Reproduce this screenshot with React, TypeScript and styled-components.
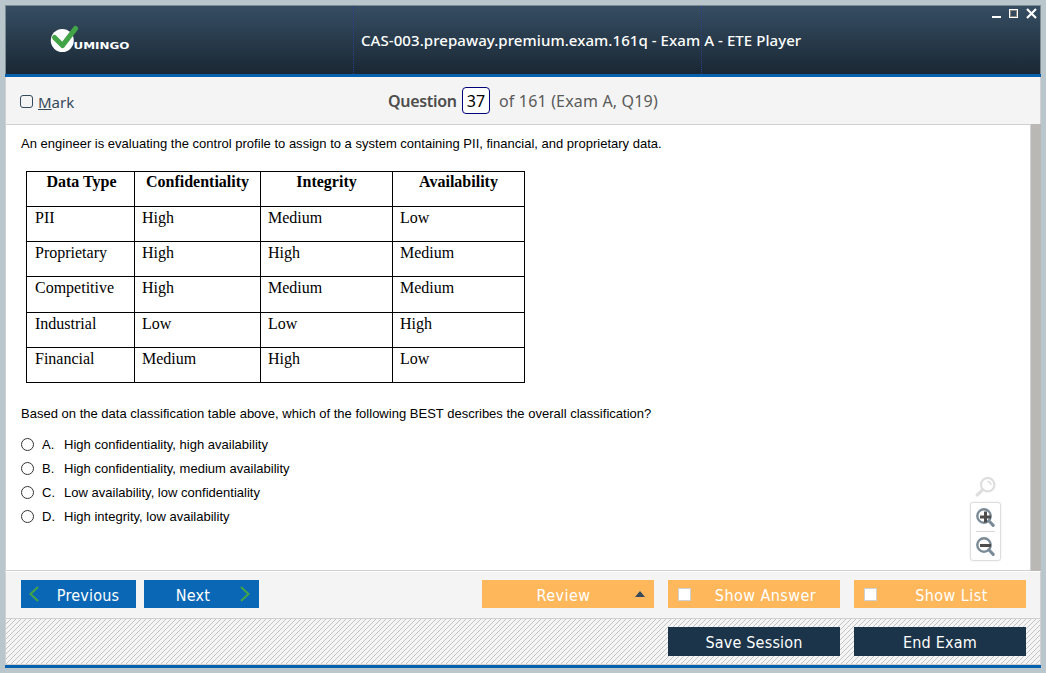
import React from "react";
import styled, { createGlobalStyle } from "styled-components";

const ui = `"Noto Sans", "Open Sans", sans-serif`;
const buttonFont = `"DejaVu Sans Condensed", "DejaVu Sans", sans-serif`;

const GlobalStyle = createGlobalStyle`
  * { box-sizing: border-box; }
  body { margin: 0; background: #b9c6cc; overflow: hidden; }
`;

const Desktop = styled.div`
  height: 673px;
  padding: 5px;
  background: #b9c6cc;
`;

const Window = styled.div`
  display: flex;
  flex-direction: column;
  width: 1036px;
  height: 663px;
`;

const Header = styled.header`
  display: grid;
  grid-template-columns: 348px 348px 1fr;
  height: 69px;
  border: 1px solid #7b8c92;
  border-bottom: 0;
  background: linear-gradient(#364e63, #1a2734);
`;

const HeaderCell = styled.div<{ $ruled?: boolean }>`
  height: 68px;
  border-right: ${(p) => (p.$ruled ? "1px dotted #2c3f8c" : "0")};
`;

const LogoCell = styled(HeaderCell)`
  padding: 18px 0 0 44px;
`;

const Title = styled.h1`
  margin: 0;
  padding: 23px 0 0 7px;
  font: 500 15px/22px ${ui};
  letter-spacing: 0.07px;
  color: #fff;
  white-space: nowrap;
`;

const WindowControls = styled.div`
  display: flex;
  justify-content: flex-end;
  padding: 2px 2px 0 0;
`;

const Accent = styled.div`
  height: 3px;
  background: #0560ae;
`;

const QuestionBar = styled.div`
  display: flex;
  align-items: flex-start;
  height: 48px;
  border: 1px solid #d0d0d0;
  border-top: 0;
  background: #f4f4f4;
`;

const MarkLabel = styled.label`
  display: flex;
  align-items: center;
  gap: 5px;
  width: 382px;
  padding: 14px 0 0 14px;
  font: 15px/22px ${ui};
  color: #34495c;
`;

const MarkBox = styled.span`
  width: 13px;
  height: 13px;
  margin-top: -2px;
  border: 1px solid #34495c;
  border-radius: 3px;
`;

const Counter = styled.div`
  display: flex;
  padding-top: 10px;
  font: 16px/28px ${ui};
  letter-spacing: 0.17px;
  color: #5a5a5a;
  white-space: nowrap;
`;

const CounterWord = styled.b`
  width: 74px;
  font-weight: 600;
  letter-spacing: -0.3px;
  color: #4d4d4d;
`;

const NumberBox = styled.span`
  width: 28px;
  height: 27px;
  margin-right: 9px;
  border: 1px solid #00007c;
  border-radius: 4px;
  background: #fff;
  color: #000;
  line-height: 27px;
  letter-spacing: 0;
  text-align: center;
`;

const Body = styled.main`
  display: flex;
  height: 447px;
  margin-top: -1px;
`;

const Page = styled.section`
  display: flex;
  justify-content: space-between;
  width: 1026px;
  height: 447px;
  border: 1px solid #d0d0d0;
  background: #fff;
`;

const Scrollbar = styled.div`
  width: 10px;
  background: #bab8b4;
`;

const Content = styled.div`
  padding: 10px 0 0 15px;
  font: 13px/18px "Liberation Sans", Arial, sans-serif;
  color: #000;
  white-space: nowrap;
`;

const Text = styled.p`
  margin: 0;
  letter-spacing: 0.01px;
`;

const DataTable = styled.table`
  table-layout: fixed;
  width: 499px;
  margin: 18px 0 22px 5px;
  border-collapse: collapse;
  font: 16px/18px "Liberation Serif", "Times New Roman", serif;
`;

const Column = styled.col<{ $w: number }>`
  width: ${(p) => p.$w}px;
`;

const Row = styled.tr<{ $h?: number }>`
  height: ${(p) => p.$h ?? 35}px;
`;

const Cell = styled.td`
  padding: 2px 0 0 7px;
  border: 1px solid #000;
  vertical-align: top;

  &:first-child {
    padding-left: 8px;
  }
`;

const HeadCell = styled.th`
  padding: 1px 0 0;
  border: 1px solid #000;
  vertical-align: top;
  text-align: center;

  &:first-child {
    padding-left: 2px;
  }
`;

const Options = styled.div`
  margin-top: 10px;
`;

const Option = styled.label`
  display: flex;
  align-items: center;
  height: 24px;
`;

const Radio = styled.span`
  width: 13px;
  height: 13px;
  margin: -1px 8px 0 0;
  border: 1px solid #333;
  border-radius: 50%;
`;

const Letter = styled.span`
  width: 22px;
`;

const ZoomTools = styled.div`
  display: flex;
  flex-direction: column;
  align-items: center;
  align-self: flex-end;
  width: 31px;
  margin: 0 29px 9px 0;
`;

const ZoomPanel = styled.div`
  display: flex;
  flex-direction: column;
  align-items: center;
  width: 31px;
  height: 59px;
  margin-top: 5px;
  border: 1px solid #dedede;
  border-radius: 3px;
  box-shadow: 0 0 2px #e2e2e2;
`;

const ZoomCell = styled.div<{ $ruled?: boolean }>`
  display: flex;
  align-items: center;
  justify-content: center;
  width: 19px;
  height: 29px;
  padding-top: 2px;
  border-bottom: ${(p) => (p.$ruled ? "1px solid #d8d8d8" : "0")};
`;

const Toolbar = styled.div`
  display: flex;
  height: 48px;
  padding: 8px 14px 0 15px;
  border: 1px solid #d0d0d0;
  border-top-color: #fff;
  background: #f4f4f4;
`;

const dot = "conic-gradient(from 0deg at 1px 1px, transparent 270deg, #c3c3c3 270deg)";

/* Five single-pixel dots make one diagonal in each 5px tile. */
const Hatch = styled.div`
  display: flex;
  justify-content: flex-end;
  gap: 14px;
  height: 45px;
  padding: 8px 14px 0;
  background-color: #f5f5f5;
  background-image: ${Array(5).fill(dot).join(", ")};
  background-size: 5px 5px;
  background-position: 0 4px, 1px 3px, 2px 2px, 3px 1px, 4px 0;
`;

const Footer = styled.footer`
  height: 46px;
  border: 1px solid #d0d0d0;
  border-top: 0;
`;

const Button = styled.button<{ $tone: "blue" | "orange" | "navy" }>`
  display: flex;
  align-items: center;
  width: ${(p) => (p.$tone === "blue" ? 115 : 172)}px;
  height: ${(p) => (p.$tone === "navy" ? 29 : 28)}px;
  padding: 0 8px;
  border: 0;
  background: ${(p) => ({ blue: "#0a67b5", orange: "#ffb75c", navy: "#1b344a" })[p.$tone]};
  color: #fff;
  font: 16px/28px ${buttonFont};
  letter-spacing: ${(p) => (p.$tone === "orange" ? 0.45 : 0.2)}px;
  white-space: nowrap;
`;

const Caption = styled.span<{ $left?: number; $right?: number }>`
  flex: 1;
  text-align: center;
  padding: 3px ${(p) => p.$right ?? 0}px 0 ${(p) => p.$left ?? 0}px;
`;

const Arrow = styled.svg<{ $inset?: boolean }>`
  width: 10px;
  height: 16px;
  margin-right: ${(p) => (p.$inset ? 1 : 0)}px;
  fill: none;
  stroke: #43a447;
  stroke-width: 2;
`;

const Group = styled.div<{ $gap: number; $end?: boolean }>`
  display: flex;
  gap: ${(p) => p.$gap}px;
  margin-left: ${(p) => (p.$end ? "auto" : "0")};
`;

const Check = styled.span`
  width: 13px;
  height: 13px;
  margin: 1px 0 0 2px;
  border: 1px solid #d0d0d0;
  background: #fff;
`;

const Logo = () => (
  <svg width="82" height="30" viewBox="0 0 82 30">
    <circle cx="12.3" cy="16.5" r="11.5" fill="#fff" />
    <path d="M4.5 13.5 L12.5 21.5 L25.5 4.5" fill="none" stroke="#43a447" strokeWidth="5.2" strokeLinecap="round" strokeLinejoin="round" />
    <text x="23.5" y="25" fontFamily="DejaVu Sans" fontWeight="bold" fontSize="9.2" textLength="56" lengthAdjust="spacingAndGlyphs" fill="#fff">UMINGO</text>
  </svg>
);

const Magnifier = ({ sign }: { sign: "+" | "-" }) => (
  <svg width="19" height="19" viewBox="0 0 19 19" fill="none">
    <circle cx="8" cy="8" r="6.7" stroke="#7a8a96" strokeWidth="2.4" />
    <path d="M12.8 12.8 L17.2 17.4" stroke="#7a8a96" strokeWidth="3" strokeLinecap="round" />
    <path d={sign === "+" ? "M4 9h11M9.5 3.5v11" : "M4 8.5h11"} stroke="#4d4d4d" strokeWidth="3" />
  </svg>
);

const columns = [
  { name: "Data Type", width: 108 },
  { name: "Confidentiality", width: 126 },
  { name: "Integrity", width: 132 },
  { name: "Availability", width: 132 },
];

const rows = [
  ["PII", "High", "Medium", "Low"],
  ["Proprietary", "High", "High", "Medium"],
  ["Competitive", "High", "Medium", "Medium"],
  ["Industrial", "Low", "Low", "High"],
  ["Financial", "Medium", "High", "Low"],
];

const options = [
  ["A.", "High confidentiality, high availability"],
  ["B.", "High confidentiality, medium availability"],
  ["C.", "Low availability, low confidentiality"],
  ["D.", "High integrity, low availability"],
];

export default function App() {
  return (
    <Desktop>
      <GlobalStyle />
      <Window>
        <Header>
          <LogoCell $ruled><Logo /></LogoCell>
          <HeaderCell $ruled>
            <Title>CAS-003.prepaway.premium.exam.161q - Exam A - ETE Player</Title>
          </HeaderCell>
          <WindowControls>
            <svg width="46" height="12" viewBox="0 0 46 12" fill="none" stroke="#fff">
              <path d="M0 9h9" strokeWidth="2" />
              <rect x="17.5" y="1.5" width="8" height="8" />
              <rect x="18.5" y="2.5" width="6" height="6" stroke="#8a847c" />
              <path d="M35 1l9 9M44 1l-9 9" strokeWidth="2.2" />
            </svg>
          </WindowControls>
        </Header>
        <Accent />
        <QuestionBar>
          <MarkLabel><MarkBox /><span><u>M</u>ark</span></MarkLabel>
          <Counter>
            <CounterWord>Question</CounterWord>
            <NumberBox>37</NumberBox>
            <span>of 161 (Exam A, Q19)</span>
          </Counter>
        </QuestionBar>
        <Body>
          <Page>
            <Content>
              <Text>An engineer is evaluating the control profile to assign to a system containing PII, financial, and proprietary data.</Text>
              <DataTable>
                <colgroup>
                  {columns.map((c) => <Column key={c.name} $w={c.width} />)}
                </colgroup>
                <thead>
                  <Row>
                    {columns.map((c) => <HeadCell key={c.name}>{c.name}</HeadCell>)}
                  </Row>
                </thead>
                <tbody>
                  {rows.map((r, i) => (
                    <Row key={r[0]} $h={i === 2 ? 36 : 35}>
                      {r.map((c, j) => <Cell key={j}>{c}</Cell>)}
                    </Row>
                  ))}
                </tbody>
              </DataTable>
              <Text>Based on the data classification table above, which of the following BEST describes the overall classification?</Text>
              <Options>
                {options.map(([l, t]) => (
                  <Option key={l}><Radio /><Letter>{l}</Letter><Text as="span">{t}</Text></Option>
                ))}
              </Options>
            </Content>
            <ZoomTools>
              <svg width="22" height="20" viewBox="0 0 22 20" fill="none" stroke="#dedede" strokeLinecap="round">
                <circle cx="12.7" cy="7.7" r="6.7" strokeWidth="2.2" />
                <path d="M7.6 12.8 L2.2 18" strokeWidth="3.2" />
                <path d="M12.9 4.5 A3.5 3.5 0 0 1 15.9 7.5" strokeWidth="1.4" />
              </svg>
              <ZoomPanel>
                <ZoomCell $ruled><Magnifier sign="+" /></ZoomCell>
                <ZoomCell><Magnifier sign="-" /></ZoomCell>
              </ZoomPanel>
            </ZoomTools>
          </Page>
          <Scrollbar />
        </Body>
        <Toolbar>
          <Group $gap={8}>
            <Button $tone="blue">
              <Arrow viewBox="0 0 10 16"><path d="M9 1L1.5 8L9 15" /></Arrow>
              <Caption $left={9}>Previous</Caption>
            </Button>
            <Button $tone="blue">
              <Caption $right={6}>Next</Caption>
              <Arrow $inset viewBox="0 0 10 16"><path d="M1 1L8.5 8L1 15" /></Arrow>
            </Button>
          </Group>
          <Group $gap={14} $end>
            <Button $tone="orange">
              <Caption $left={3}>Review</Caption>
              <svg width="12" height="6" viewBox="0 0 12 6"><path d="M1 6L6 0L11 6z" fill="#34495c" /></svg>
            </Button>
            <Button $tone="orange"><Check /><Caption $left={8}>Show Answer</Caption></Button>
            <Button $tone="orange"><Check /><Caption $left={8}>Show List</Caption></Button>
          </Group>
        </Toolbar>
        <Footer>
          <Hatch>
            <Button $tone="navy"><Caption>Save Session</Caption></Button>
            <Button $tone="navy"><Caption>End Exam</Caption></Button>
          </Hatch>
        </Footer>
        <Accent />
      </Window>
    </Desktop>
  );
}
